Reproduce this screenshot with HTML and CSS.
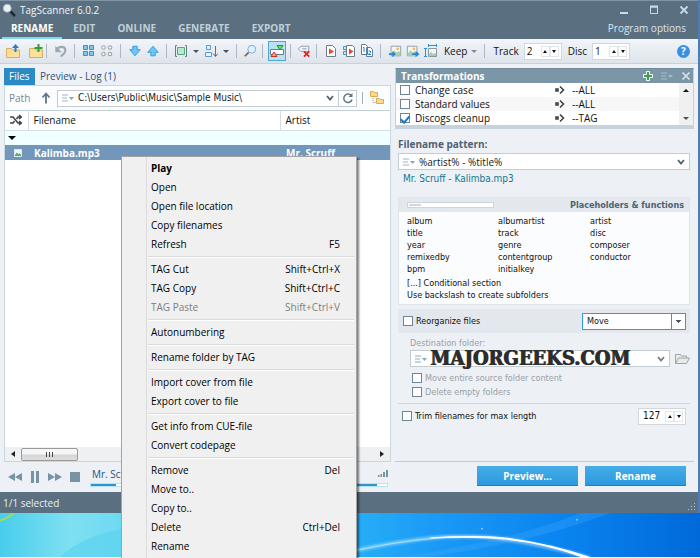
FILE: index.html
```html
<!DOCTYPE html>
<html lang="en">
<head>
<meta charset="utf-8">
<title>TagScanner 6.0.2</title>
<link rel="stylesheet" href="styles.css">
</head>
<body>
<div class="app">
  <header class="titlebar">
    <div class="caption">
      <svg class="ico" viewBox="0 0 16 16"><path d="M9 9l5 5" stroke="#222b33" stroke-width="3" stroke-linecap="round"/><circle cx="6" cy="6" r="4.500" fill="#e8f0f4" stroke="#aab8c2"/></svg>
      <h1>TagScanner 6.0.2</h1>
      <div class="winbtns">
        <button aria-label="Minimize"><svg viewBox="0 0 10 10"><path d="M1 8h8" stroke="#c3dcec" stroke-width="2"/></svg></button>
        <button aria-label="Maximize"><svg viewBox="0 0 10 10"><path d="M1.500 2h7v6.500h-7z" fill="none" stroke="#c3dcec"/><path d="M1 1.500h8" stroke="#c3dcec" stroke-width="2"/></svg></button>
        <button aria-label="Close"><svg viewBox="0 0 10 10"><path d="M1.500 1.500l7 7m0-7l-7 7" stroke="#c3dcec" stroke-width="1.800"/></svg></button>
      </div>
    </div>
    <nav class="tabs">
      <a href="#" class="active">RENAME</a><a href="#">EDIT</a><a href="#">ONLINE</a><a href="#">GENERATE</a><a href="#">EXPORT</a>
      <a href="#" class="options">Program options</a>
    </nav>
  </header>

  <div class="toolbar">
    <div class="group">
      <button class="tool wide" aria-label="Open folder"><svg viewBox="0 0 16 16"><path d="M1.500 14.500v-9h5l1 1.500h7v7.500z" fill="#fbdf9a" stroke="#dcae5c"/><path d="M10.500 9V3" stroke="#1f7fd6" stroke-width="2"/><path d="M7 5l3.500-4L14 5z" fill="#1f7fd6"/></svg></button>
      <button class="tool wide" aria-label="Add folder"><svg viewBox="0 0 16 16"><path d="M1.500 14.500v-9h5l1 1.500h7v7.500z" fill="#fbdf9a" stroke="#dcae5c"/><path d="M10.500 1v8M6.500 5h8" stroke="#2ea23a" stroke-width="2"/></svg></button>
    </div>
    <div class="group">
      <button class="tool" aria-label="Undo"><svg viewBox="0 0 16 16"><path d="M3 6.500C6 2 13 2 13 7.500c0 4-4 4-5 7" fill="none" stroke="#9aaab7" stroke-width="2.500"/><path d="M1.500 2v7.500H9z" fill="#9aaab7"/></svg></button>
    </div>
    <div class="group">
      <button class="tool" aria-label="Select all"><svg viewBox="0 0 14 14"><path d="M1.500 1.500h4v4h-4zM7.500 1.500h4v4h-4zM1.500 7.500h4v4h-4zM7.500 7.500h4v4h-4z" fill="#7cc8f2" stroke="#2a96dc"/></svg></button>
      <button class="tool" aria-label="Select none"><svg viewBox="0 0 14 14"><g fill="#f7f9fb" stroke="#8d98a2"><circle cx="3.500" cy="3.500" r="1.800"/><circle cx="10" cy="3.500" r="1.800"/><circle cx="3.500" cy="10" r="1.800"/><circle cx="10" cy="10" r="1.800"/></g></svg></button>
    </div>
    <div class="group">
      <button class="tool" aria-label="Move down"><svg viewBox="0 0 16 16"><path d="M5.500 2.500h5v4h3.500L8 13.500 2 6.500h3.500z" fill="#6cc6f5" stroke="#2a96dc"/></svg></button>
      <button class="tool" aria-label="Move up"><svg viewBox="0 0 16 16"><path d="M5.500 13.500h5v-4h3.500L8 2.500 2 9.500h3.500z" fill="#6cc6f5" stroke="#2a96dc"/></svg></button>
    </div>
    <div class="group">
      <button class="tool" aria-label="Fit columns"><svg viewBox="0 0 14 14"><path d="M3 1.500H1.500v11H3M11 1.500h1.500v11H11" fill="none" stroke="#6d7a85"/><path d="M3.500 3.500h7v7h-7z" fill="#b8e8cf" stroke="#58a983"/></svg></button>
      <button class="drop" aria-label="Column menu"></button>
      <button class="tool" aria-label="Sort"><svg viewBox="0 0 14 14"><path d="M2.500 1.500h4v4h-4zM1.500 8.500h6v4h-6z" fill="#e3f3fc" stroke="#5a9ccd"/><path d="M11.500 2v10M9 9.500l2.500 3 2.500-3" fill="none" stroke="#5d6f7d"/></svg></button>
      <button class="drop" aria-label="Sort menu"></button>
    </div>
    <div class="group">
      <button class="tool slim" aria-label="Find"><svg viewBox="0 0 16 16"><path d="M6.500 9.500L2 14" stroke="#7e5f4e" stroke-width="2"/><circle cx="10" cy="6" r="4.500" fill="#dff1fc" stroke="#6da7d6"/></svg></button>
    </div>
    <div class="group">
      <button class="tool pressed" aria-label="Transformations" aria-pressed="true"><svg viewBox="0 0 16 16"><path d="M1.500 6.500h13v5h-13z" fill="#fff" stroke="#6c7a85"/><path d="M8 2.500h6L11 7z" fill="#6fdc6d" stroke="#25952e"/><path d="M2 13.500h6L5 9z" fill="#f6a594" stroke="#cc2f22"/></svg></button>
    </div>
    <div class="group">
      <button class="tool slim" aria-label="Remove tag"><svg viewBox="0 0 16 16"><path d="M4.500 2.500h9v6h-9L1.500 5.500z" fill="#f1f2f8" stroke="#8791a8"/><path d="M6 5.500h5" stroke="#8791a8"/><path d="M8 8.500l6 6m0-6l-6 6" stroke="#d9231d" stroke-width="2"/></svg></button>
    </div>
    <div class="group">
      <button class="tool" aria-label="Script"><svg viewBox="0 0 14 14"><path d="M2.500 1.500h6l3 3v8h-9z" fill="#fff" stroke="#6f7c88"/><path d="M5 4.500v6l5-3z" fill="#e8491e"/></svg></button>
      <button class="tool" aria-label="Scripts"><svg viewBox="0 0 14 14"><path d="M1.500 2.500h3v3h-3zM1.500 7.500h3v3h-3z" fill="#c9e8fa" stroke="#3c98d2"/><path d="M4.500 1.500h6l2 2v9h-8z" fill="#fff" stroke="#6f7c88"/><path d="M7 4.500v6l4.500-3z" fill="#e8491e"/></svg></button>
      <button class="tool" aria-label="Numbering"><svg viewBox="0 0 14 14"><path d="M1.500 .5h4l2 2v8h-6zM6.500 3.500h4l2 2v7h-6z" fill="#fff" stroke="#5c7d9b"/><path d="M3 3.500h1V8M8.500 7h2v1.500l-2 1.500v.500h2.500" fill="none" stroke="#2285d2"/></svg></button>
    </div>
    <div class="group last">
      <button class="tool" aria-label="Import cover"><svg viewBox="0 0 16 16"><path d="M3.500 2.500h11v11h-11z" fill="#f3f7f0" stroke="#8b97a1"/><path d="M4 11l3-4 3 3 2-2 2 2v3H4z" fill="#a5d0b0"/><circle cx="11" cy="5.500" r="1.500" fill="#f3b267"/><path d="M1 11.500h5" stroke="#1f86db" stroke-width="2"/><path d="M5 8l4 3.500L5 15z" fill="#1f86db"/></svg></button>
      <button class="tool" aria-label="Export cover"><svg viewBox="0 0 16 16"><path d="M1.500 2.500h11v11h-11z" fill="#f3f7f0" stroke="#8b97a1"/><path d="M2 11l3-4 3 3 2-2 2 2v3H2z" fill="#a5d0b0"/><circle cx="9" cy="5.500" r="1.500" fill="#f3b267"/><path d="M7 11.500h5" stroke="#1f86db" stroke-width="2"/><path d="M11 8l4.500 3.500L11 15z" fill="#1f86db"/></svg></button>
      <button class="tool" aria-label="Cover size"><svg viewBox="0 0 14 14"><path d="M4.500 4.500h8v8h-8z" fill="#f3f7f0" stroke="#8b97a1"/><path d="M5 10l2-2 2 2 3-1v3H5z" fill="#a5d0b0"/><path d="M4 1.500h9M4.500 0v3M12.500 0v3M1.500 4v9M0 4.500h3M0 12.500h3" stroke="#2f8fdd"/></svg></button>
      <button class="keep">Keep</button>
      <button class="drop soft" aria-label="Keep menu"></button>
    </div>
    <div class="group fields">
      <label for="track">Track</label>
      <span class="spin"><input id="track" value="2"><button class="up" aria-label="Increase track"></button><button class="down" aria-label="Decrease track"></button></span>
      <label for="disc">Disc</label>
      <span class="spin"><input id="disc" value="1"><button class="up" aria-label="Increase disc"></button><button class="down" aria-label="Decrease disc"></button></span>
    </div>
    <button class="help" aria-label="Help">?</button>
  </div>

  <main>
    <section class="left">
      <div class="viewtabs"><a href="#" class="on">Files</a><a href="#">Preview - Log (1)</a></div>
      <div class="files">
        <div class="pathbar">
          <label for="path">Path</label>
          <button class="plain" aria-label="Parent folder"><svg class="ico12" viewBox="0 0 12 12"><path d="M6 11.500V2M2.500 5.500L6 1.500l3.500 4" fill="none" stroke="#5f7786" stroke-width="1.800"/></svg></button>
          <div class="combo grow">
            <svg class="hist" viewBox="0 0 12 8"><path d="M0 1h6M0 4h5M0 7h6" stroke="#a3b3bd"/><path d="M7 3h5L9.500 6z" fill="#8fa3b0"/></svg>
            <input id="path" class="pathtext" value="C:\Users\Public\Music\Sample Music\">
            <button class="plain" aria-label="Recent paths"><svg class="chev" viewBox="0 0 8 8"><path d="M1 2l3 3.500L7 2" fill="none" stroke="#4f6270" stroke-width="1.800"/></svg></button>
            <button class="plain refresh" aria-label="Reload"><svg class="ico12" viewBox="0 0 12 12"><path d="M9.500 4A4.200 4.200 0 1 0 10 7.500" fill="none" stroke="#5f7786" stroke-width="1.500"/><path d="M10.500 1v4h-4z" fill="#5f7786"/></svg></button>
          </div>
          <span class="vsep"></span>
          <button class="plain" aria-label="Folder tree"><svg class="ico16" viewBox="0 0 16 16"><path d="M1.500 6.500v-5h3l1 1h3v4zM7.500 13.500v-5h3l1 1h3v4z" fill="#fbd98a" stroke="#d9ab55"/><path d="M4 8v4.500h3" fill="none" stroke="#8d98a2" stroke-dasharray="1 1"/></svg></button>
        </div>
        <table>
          <thead><tr><th class="idx"><svg class="ico12" viewBox="0 0 12 12"><path d="M0 3h3l5 6h3M0 9h3l1.500-2M6.500 5L8 3h3M9 1l2.500 2L9 5M9 7l2.500 2L9 11" fill="none" stroke="#3a444c" stroke-width="1.500"/></svg></th><th>Filename</th><th class="artist">Artist</th></tr></thead>
          <tbody>
            <tr class="grouprow"><td colspan="3"><span class="tri"></span></td></tr>
            <tr class="selected"><td class="idx"><svg class="thumb" viewBox="0 0 9 9"><path d="M.5 .5h8v8h-8z" fill="#f2f8f4" stroke="#e3edf5"/><path d="M1 7l2-3 2 2 1.500-1.500L8 7v1H1z" fill="#5aa87c"/></svg></td><td>Kalimba.mp3</td><td class="artist">Mr. Scruff</td></tr>
          </tbody>
        </table>
        <div class="hscroll"><button class="arrow l" aria-label="Scroll left"></button><span class="thumbbar"><i></i><i></i><i></i></span><button class="arrow r" aria-label="Scroll right"></button></div>
      </div>
    </section>

    <section class="right">
      <div class="transform">
        <h2><span>Transformations</span>
          <button class="plain" aria-label="Add"><svg class="ico10" viewBox="0 0 10 10"><path d="M3.500 .5h3v3h3v3h-3v3h-3v-3h-3v-3h3z" fill="#3fa045" stroke="#fff"/></svg></button>
          <button class="plain" aria-label="List menu"><svg class="hist" viewBox="0 0 12 8"><path d="M0 1h6M0 4h5M0 7h6" stroke="#a5bac7"/><path d="M7 3h5L9.500 6z" fill="#a5bac7"/></svg></button>
          <button class="plain" aria-label="Close panel"><svg class="ico10" viewBox="0 0 10 10"><path d="M1.500 1.500l7 7m0-7l-7 7" stroke="#d8e6ee" stroke-width="1.600"/></svg></button>
        </h2>
        <div class="tlist">
          <div class="trows">
            <div class="trow"><input type="checkbox" id="t1"><label for="t1">Change case</label><svg class="ico10" viewBox="0 0 10 10"><path d="M1 4h2v2H1zM5 1.500L8.500 5 5 8.500" fill="none" stroke="#333f49" stroke-width="1.500"/></svg><span>--ALL</span></div>
            <div class="trow alt"><input type="checkbox" id="t2"><label for="t2">Standard values</label><svg class="ico10" viewBox="0 0 10 10"><path d="M1 4h2v2H1zM5 1.500L8.500 5 5 8.500" fill="none" stroke="#333f49" stroke-width="1.500"/></svg><span>--ALL</span></div>
            <div class="trow"><input type="checkbox" id="t3" checked><label for="t3">Discogs cleanup</label><svg class="ico10" viewBox="0 0 10 10"><path d="M1 4h2v2H1zM5 1.500L8.500 5 5 8.500" fill="none" stroke="#333f49" stroke-width="1.500"/></svg><span>--TAG</span></div>
          </div>
          <div class="vscroll"><button class="arrow u" aria-label="Scroll up"></button><button class="arrow d" aria-label="Scroll down"></button></div>
        </div>
      </div>

      <div class="pattern">
        <label for="pattern">Filename pattern:</label>
        <div class="combo">
          <svg class="hist" viewBox="0 0 12 8"><path d="M0 1h6M0 4h5M0 7h6" stroke="#a3b3bd"/><path d="M7 3h5L9.500 6z" fill="#8fa3b0"/></svg>
          <input id="pattern" value="%artist% - %title%">
          <button class="plain" aria-label="Patterns"><svg class="chev" viewBox="0 0 8 8"><path d="M1 2l3 3.500L7 2" fill="none" stroke="#4f6270" stroke-width="1.800"/></svg></button>
        </div>
        <p class="sample">Mr. Scruff - Kalimba.mp3</p>
      </div>

      <div class="placeholders">
        <h3><span class="slider"><i></i></span>Placeholders &amp; functions</h3>
        <div class="cols">
          <ul><li>album</li><li>title</li><li>year</li><li>remixedby</li><li>bpm</li></ul>
          <ul><li>albumartist</li><li>track</li><li>genre</li><li>contentgroup</li><li>initialkey</li></ul>
          <ul><li>artist</li><li>disc</li><li>composer</li><li>conductor</li></ul>
        </div>
        <p>[...] Conditional section</p>
        <p>Use backslash to create subfolders</p>
      </div>

      <div class="reorg">
        <input type="checkbox" id="reorg"><label for="reorg">Reorganize files</label>
        <span class="select"><select aria-label="Action"><option>Move</option></select></span>
      </div>
      <div class="dest">
        <label for="dest">Destination folder:</label>
        <div class="destrow">
          <div class="combo grow">
            <svg class="hist" viewBox="0 0 12 8"><path d="M0 1h6M0 4h5M0 7h6" stroke="#8fa9b8"/><path d="M7 3h5L9.500 6z" fill="#8fa9b8"/></svg>
            <input id="dest">
            <button class="plain" aria-label="Recent folders"><svg class="chev" viewBox="0 0 8 8"><path d="M1 2l3 3.500L7 2" fill="none" stroke="#6d808d" stroke-width="1.800"/></svg></button>
            <span class="watermark">MAJORGEEKS.COM</span>
          </div>
          <button class="plain" aria-label="Browse"><svg class="ico16" viewBox="0 0 16 16"><path d="M1.500 12.500v-9h5l1 1.500h5v2M1.500 12.500l3-5.500h11l-3 5.500z" fill="#e9eaea" stroke="#a0a4a6"/></svg></button>
        </div>
        <div class="check"><input type="checkbox" id="c1"><label for="c1">Move entire source folder content</label></div>
        <div class="check"><input type="checkbox" id="c2"><label for="c2">Delete empty folders</label></div>
      </div>
      <div class="trim">
        <input type="checkbox" id="trim"><label for="trim">Trim filenames for max length</label>
        <span class="spin wide"><input aria-label="Maximum length" value="127"><button class="up" aria-label="Increase"></button><button class="down" aria-label="Decrease"></button></span>
      </div>
    </section>
  </main>

  <div class="bottom">
    <div class="player">
      <button class="plain" aria-label="Previous"><svg class="ico14" viewBox="0 0 14 12"><path d="M7 2v8L0 6zM14 2v8L7 6z"/></svg></button>
      <button class="plain" aria-label="Pause"><svg class="ico14" viewBox="0 0 14 12"><path d="M3 0h3v12H3zM8 0h3v12H8z"/></svg></button>
      <button class="plain" aria-label="Next"><svg class="ico14" viewBox="0 0 14 12"><path d="M0 2v8l7-4zM7 2v8l7-4z"/></svg></button>
      <button class="plain" aria-label="Stop"><svg class="ico14" viewBox="0 0 14 12"><path d="M2 1h10v10H2z"/></svg></button>
      <div class="now"><span>Mr. Scruff</span><span class="bar"><i></i></span></div>
      <div class="vol"><svg viewBox="0 0 10 7"><path d="M0 5h1.500v2H0zM2.500 4H4v3H2.500zM5 2h2v5H5zM8 0h2v7H8z"/></svg><span class="bar high"><i></i></span></div>
    </div>
    <div class="actions"><button>Preview...</button><button>Rename</button></div>
  </div>
  <footer><span>1/1 selected</span><svg class="grip" viewBox="0 0 8 8"><path d="M6 0h1v1H6zM3 3h1v1H3zM6 3h1v1H6zM0 6h1v1H0zM3 6h1v1H3zM6 6h1v1H6z" fill="#b9c6cf"/></svg></footer>
</div>

<svg class="desktop" viewBox="0 0 700 45" preserveAspectRatio="none" aria-hidden="true">
  <defs>
    <linearGradient id="sky"><stop offset="0" stop-color="#48cdec"/><stop offset=".1" stop-color="#7fe0f2"/><stop offset=".18" stop-color="#6bd9f1"/><stop offset=".5" stop-color="#27b0f6"/><stop offset=".62" stop-color="#1b9af6"/><stop offset=".8" stop-color="#0a84f0"/><stop offset="1" stop-color="#0069da"/></linearGradient>
    <filter id="glow"><feGaussianBlur stdDeviation="1.500"/></filter>
  </defs>
  <path d="M0 0h700v45H0z" fill="url(#sky)"/>
  <path d="M60 45Q85 22 122 17V45z" fill="#5cd3f0" opacity=".7"/>
  <path d="M0 8Q8 5 14 0" fill="none" stroke="#a5dc4a" stroke-width="2"/>
  <path d="M430 45Q540 28 610 0H580Q520 26 400 45z" fill="#46b5ff" opacity=".25"/>
  <path d="M357 38Q430 22 475 24T590 46" fill="none" stroke="#bfeaff" stroke-width="2" filter="url(#glow)"/>
  <path d="M357 38Q420 24 475 24" fill="none" stroke="#a5dffc"/>
  <path d="M430 25Q475 22 505 25Q550 31 590 45h-9Q545 31 503 27Q475 24 430 26Z" fill="#fff"/>
  <circle cx="482" cy="16" r=".8" fill="#bfe7ff"/><circle cx="577" cy="7" r=".8" fill="#bfe7ff"/>
</svg>

<div class="menu" role="menu">
  <button class="b">Play</button>
  <button>Open</button>
  <button>Open file location</button>
  <button>Copy filenames</button>
  <button>Refresh<kbd>F5</kbd></button>
  <hr>
  <button>TAG Cut<kbd>Shift+Ctrl+X</kbd></button>
  <button>TAG Copy<kbd>Shift+Ctrl+C</kbd></button>
  <button disabled>TAG Paste<kbd>Shift+Ctrl+V</kbd></button>
  <hr>
  <button>Autonumbering</button>
  <hr>
  <button>Rename folder by TAG</button>
  <hr>
  <button>Import cover from file</button>
  <button>Export cover to file</button>
  <hr>
  <button>Get info from CUE-file</button>
  <button>Convert codepage</button>
  <hr>
  <button>Remove<kbd>Del</kbd></button>
  <button>Move to..</button>
  <button>Copy to..</button>
  <button>Delete<kbd>Ctrl+Del</kbd></button>
  <button>Rename</button>
</div>
</body>
</html>
```
FILE: styles.css
```css
:root {
  --ui: "Open Sans", "Noto Sans", sans-serif;
  --small: "DejaVu Sans Condensed", "DejaVu Sans", sans-serif;
  --slate: #5a7080;
}
* { box-sizing: border-box; }
html, body { margin: 0; }
body {
  position: relative;
  display: flex;
  flex-direction: column;
  min-height: 100vh;
  overflow: hidden;
  background: #fff;
  color: #111;
  font: 10px/14px var(--ui);
}
h1, h2, h3, p, ul { margin: 0; padding: 0; font: inherit; }
ul { list-style: none; }
a { text-decoration: none; }
button, input, select, kbd { font: inherit; color: inherit; margin: 0; padding: 0; border: 0; background: none; }
input, select { min-width: 0; outline: 0; }
svg { display: block; flex: none; }
.ico { width: 14px; height: 14px; }
.ico10 { width: 10px; height: 10px; }
.ico12 { width: 12px; height: 12px; }
.ico14 { width: 14px; height: 12px; fill: #7893a4; }
.ico16 { width: 16px; height: 16px; }
.hist { width: 12px; height: 8px; }
.chev { width: 8px; height: 8px; }
.grow { flex: 1; }

.app {
  flex: 1;
  display: flex;
  flex-direction: column;
  background: #edf1f6;
  border-right: 2px solid #4c7db4;
}
.titlebar { background: var(--slate); border-top: 1px solid #7f95a4; padding-left: 2px; }
.caption { display: flex; align-items: center; height: 18px; color: #f2f6f9; }
.caption h1 { margin-left: 4px; flex: 1; }
.winbtns { display: flex; gap: 20px; padding-right: 9px; }
.winbtns svg { width: 10px; height: 10px; }
.tabs { display: flex; height: 20px; line-height: 18px; font-weight: 700; }
.tabs a { padding: 0 11px; color: #c0d0da; }
.tabs a.active { padding: 0 9px; color: #fff; border-bottom: 2px solid #7fd9ec; }
.tabs a.options { margin-left: auto; padding-right: 12px; font-weight: 400; color: #dbe5eb; }

.toolbar {
  display: flex;
  align-items: center;
  height: 25px;
  background: linear-gradient(#f2f5f9, #dde4ea);
  border-bottom: 1px solid #c8d1d9;
}
.group { display: flex; align-items: center; }
.group + .group { padding: 0 4px 0 5px; border-left: 1px solid #aab9c4; height: 14px; }
.group:first-child { padding-left: 2px; gap: 2px; }
.tool { display: grid; place-items: center; width: 18px; height: 20px; flex: none; }
.tool svg { width: 14px; height: 14px; }
.tool.wide { width: 21px; }
.tool.wide svg { width: 16px; height: 16px; }
.tool.slim { width: 16px; }
.tool.pressed { background: #b8e2f6; border: 1px solid #4aa7d6; }
.tool.pressed svg { width: 16px; height: 16px; }
.drop { width: 12px; height: 14px; display: grid; place-items: center; }
.drop::before, .arrow::before, .spin button::before, .tri {
  content: "";
  display: block;
  border: 3px solid transparent;
  border-top-color: #47525b;
  border-bottom: 0;
}
.drop.soft::before { border-top-color: #7d8b96; }
.keep { margin-left: 4px; }
.group.last { padding-right: 3px; }
.group.last .drop { width: 14px; }
.fields.group { padding-left: 8px; }
.spin {
  display: flex;
  align-items: center;
  width: 38px;
  height: 17px;
  margin: 0 6px 0 5px;
  padding-right: 2px;
  background: #fff;
  border: 1px solid #d0d8de;
}
.spin input { flex: 1; width: 10px; padding-left: 2px; }
.spin button { width: 9px; height: 11px; display: grid; place-items: center; border: 1px solid #e2e6ea; }
.spin button::before { border-width: 3px 2px 0; border-top-color: #111; }
.spin button.up::before { border: 2px solid transparent; border-top: 0; border-bottom: 3px solid #111; }
.arrow.u::before { border: 3px solid transparent; border-top: 0; border-bottom-color: #111; }
.help {
  margin-left: auto;
  margin-right: 8px;
  width: 13px;
  height: 13px;
  line-height: 13px;
  border-radius: 50%;
  background: #3a8fe0;
  color: #fff;
  font-weight: 700;
}

main { flex: 1; display: flex; gap: 4px; padding: 4px 4px 0; }
.left { flex: 1; display: flex; flex-direction: column; min-width: 0; }
.viewtabs { display: flex; line-height: 17px; }
.viewtabs a { color: #2d4f7c; padding: 0 5px; }
.viewtabs a.on { background: #2a8ac4; color: #fff; width: 31px; }
.files { flex: 1; display: flex; flex-direction: column; background: #fff; border: 1px solid #cbd6de; }
.pathbar { display: flex; align-items: center; height: 25px; padding: 0 5px 0 4px; color: #788894; border-bottom: 1px solid #c3d0d9; background: #fbfcfd; }
.pathbar label { width: 31px; }
.plain { display: grid; place-items: center; }
.combo { position: relative; display: flex; align-items: center; height: 17px; background: #fff; border: 1px solid #c3ccd3; padding: 0 4px; color: #1a1a1a; }
.combo input { flex: 1; padding: 0 4px; }
.pathbar .combo { margin-left: 5px; padding-right: 0; }
.pathtext, .sample { font-family: var(--small); }
.pathbar .chev { margin-right: 4px; }
.refresh { width: 18px; height: 15px; border-left: 1px solid #c3ccd3; }
.vsep { width: 1px; height: 12px; margin: 0 6px 0 5px; background: #a5b1ba; }
table { width: 100%; border-collapse: collapse; table-layout: fixed; }
th { height: 19px; padding: 0 0 0 5px; text-align: left; font-weight: 400; border-bottom: 1px solid #cfe0ea; border-left: 1px solid #d5dde3; }
td { height: 15px; padding: 0 0 0 6px; line-height: 14px; }
.idx { width: 23px; padding: 0; border-left: 0; }
th.idx svg { margin: auto; }
.idx .thumb { width: 8px; height: 8px; margin: auto 1px auto auto; }
.artist { width: 110px; }
.grouprow td { background: #f0ffff; padding-left: 2px; }
.tri { width: 0; border-width: 4px 4px 0; border-top-color: #000; margin-left: 1px; }
.selected { background: #7297bb; color: #fff; font-weight: 700; outline: 1px dotted #a58d6c; outline-offset: -1px; }
.selected td.idx { padding: 0 5px 0 0; }
.hscroll { display: flex; align-items: center; margin-top: auto; height: 14px; background: #eff0f1; }
.arrow { width: 16px; height: 12px; display: grid; place-items: center; }
.arrow.l::before { border: 3px solid transparent; border-left: 0; border-right: 4px solid #222; }
.arrow.r::before { border: 3px solid transparent; border-right: 0; border-left: 4px solid #222; }
.arrow.r { margin-left: auto; }
.thumbbar { display: flex; justify-content: center; align-items: center; gap: 2px; width: 57px; height: 13px; border: 1px solid #9a9a9a; border-radius: 2px; background: linear-gradient(#f6f6f6 45%, #d5d5d5 55%, #dedede); }
.thumbbar i { width: 1px; height: 5px; background: #444; }

.right { width: 299px; border-bottom: 1px solid #c3ccd3; }
.transform h2 { display: flex; align-items: center; gap: 8px; height: 14px; padding: 0 2px 0 5px; background: #7a96a7; color: #fff; font-weight: 700; }
.transform h2 span { flex: 1; }
.transform { border: solid #c6d3dc; border-width: 0 1px 4px; border-top: 1px solid #6f8b9c; }
.tlist { display: flex; background: #fff; }
.trows { flex: 1; }
.trow { display: flex; align-items: center; height: 14px; padding-left: 4px; }
.trow.alt { background: #f7f7f7; }
.trow label { width: 145px; padding-left: 5px; }
.trow span { margin-left: 7px; }
.vscroll { display: flex; flex-direction: column; justify-content: space-between; width: 14px; background: #f0f0f0; }
.vscroll .arrow { width: 14px; height: 14px; }
input[type="checkbox"] {
  appearance: none;
  flex: none;
  width: 10px;
  height: 10px;
  border: 1px solid #6f8494;
  background: #fff;
  display: grid;
  place-items: center;
}
input[type="checkbox"]:checked::before { content: ""; width: 4px; height: 7px; border: solid #1e78c2; border-width: 0 2px 2px 0; transform: rotate(40deg); }
.pattern { padding: 7px 4px 0 3px; }
.pattern > label { display: block; line-height: 16px; height: 17px; font-weight: 700; color: #4d6272; }
.sample { margin: 2px 0 0 5px; color: #16778c; line-height: 14px; }
.placeholders, .reorg, .dest, .trim { font-family: var(--small); font-size: 9px; line-height: 12px; }
.placeholders { margin: 11px 4px 0 3px; background: #fafcfd; border: 1px solid #dfe5ea; padding-bottom: 3px; }
.placeholders h3 { display: flex; align-items: center; justify-content: space-between; height: 14px; padding: 0 5px 0 8px; margin-bottom: 3px; background: #e2e8ed; font-weight: 700; color: #4d6272; }
.slider { width: 87px; height: 6px; padding: 1px; border: 1px solid #ccd6da; background: #fff; }
.slider i { display: block; width: 12px; height: 2px; background: #cdd9dc; }
.cols { display: grid; grid-template-columns: 91px 92px 1fr; padding-left: 8px; margin-bottom: 2px; }
.placeholders p { padding-left: 8px; }
.reorg { display: flex; align-items: center; height: 24px; margin: 4px 4px 0 3px; padding: 0 4px 0 5px; background: #e2e8ee; }
.reorg label, .check label, .trim label { padding-left: 3px; }
.select { margin-left: auto; width: 104px; height: 17px; border: 1px solid #2c9fd0; background: #fff; display: flex; }
.select select { appearance: none; flex: 1; padding-left: 4px; }
.select::after {
  content: "";
  width: 13px;
  border-left: 1px solid #2c9fd0;
  background:
    linear-gradient(#47525b, #47525b) 4px 6px / 5px 1px no-repeat,
    linear-gradient(#47525b, #47525b) 5px 7px / 3px 1px no-repeat,
    linear-gradient(#47525b, #47525b) 6px 8px / 1px 1px no-repeat;
}
.dest { margin: 4px 4px 0 3px; padding: 0 0 4px 12px; color: #989fa4; border-bottom: 1px solid #cfd7dd; }
.dest > label { display: block; height: 13px; }
.destrow { display: flex; align-items: center; gap: 4px; margin-bottom: 4px; }
.watermark { position: absolute; left: 19px; top: -1px; color: #2d2d2d; font: 700 20px/17px "DejaVu Serif Condensed", "DejaVu Serif", serif; text-shadow: 1px 0 #2d2d2d; }
.check { display: flex; align-items: center; height: 14px; padding-left: 2px; }
.trim { display: flex; align-items: center; height: 24px; padding: 0 8px 0 7px; }
.spin.wide { width: 48px; margin: 0 0 0 auto; font-size: 10px; }
.spin.wide input { padding-left: 4px; }

.bottom { display: flex; gap: 4px; height: 30px; padding: 0 4px; }
.player { flex: 1; display: flex; align-items: center; gap: 6px; padding-left: 4px; color: #2d4f7c; }
.now, .vol { display: flex; flex-direction: column; justify-content: space-between; height: 19px; }
.now { flex: 1; margin-left: 2px; }
.vol { width: 37px; align-items: flex-end; margin-right: 3px; }
.vol svg { width: 10px; height: 7px; margin-top: 2px; fill: #7893a4; }
.now span:first-child { padding-left: 2px; line-height: 13px; }
.bar { display: block; width: 100%; height: 4px; background: #fff; border: 1px solid #b5e3f2; }
.bar i { display: block; width: 10%; height: 2px; background: #2b95cc; }
.bar.high i { width: 70%; }
.actions { display: flex; gap: 7px; width: 299px; justify-content: flex-end; padding: 4px 8px 6px 0; }
.actions button { width: 101px; height: 20px; background: linear-gradient(#46ace8, #2c9ade); border-bottom: 1px solid #1f80bd; color: #fff; font-weight: 700; }
footer { display: flex; align-items: center; justify-content: space-between; height: 21px; padding: 0 2px 0 3px; background: var(--slate); color: #e9eff3; }
.grip { width: 8px; height: 8px; margin-top: 8px; }
.desktop { width: 100%; height: 44px; margin-bottom: 1px; }

.menu {
  position: absolute;
  left: 121px;
  top: 156px;
  width: 236px;
  padding: 2px;
  display: flex;
  flex-direction: column;
  background: linear-gradient(90deg, transparent 24px, #dcdcdc 24px, #dcdcdc 25px, transparent 25px) #f0f0f0;
  border: 1px solid #a3a3a3;
  box-shadow: 2px 2px 2px rgba(0, 0, 0, .5);
}
.menu button { display: flex; justify-content: space-between; height: 19px; line-height: 18px; padding: 0 14px 0 27px; text-align: left; color: #000; }
.menu button.b { font-weight: 700; }
.menu button:disabled { color: #7e7e7e; }
.menu hr { width: calc(100% - 24px); height: 2px; margin: 2px 0 2px 24px; border: 0; border-top: 1px solid #dadada; background: #fff; }
```
